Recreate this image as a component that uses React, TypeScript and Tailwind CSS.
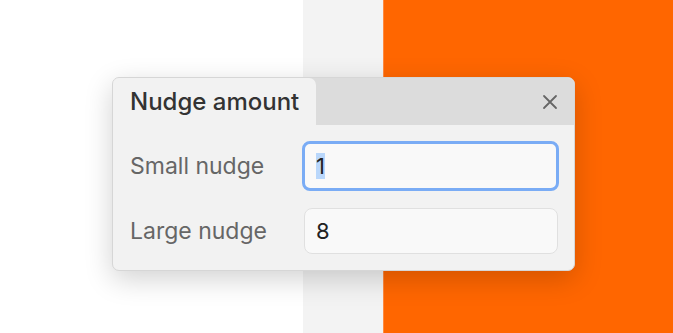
import { useEffect, useRef } from "react";

function CloseIcon() {
    return (
        <svg width="16" height="16" viewBox="0 0 16 16" fill="none" stroke="#666666" strokeWidth="1.8" strokeLinecap="round">
            <path d="M2 2L14 14M14 2L2 14" />
        </svg>
    );
}

export default function App() {
    const smallRef = useRef<HTMLInputElement>(null);

    useEffect(() => {
        const el = smallRef.current;
        if (el) {
            el.focus();
            el.select();
        }
    }, []);

    return (
        <div className="relative flex h-[333px] w-[673px] overflow-hidden font-['Inter',sans-serif]">
            <div className="w-[303px] bg-white" />
            <div className="w-[80px] bg-[#f3f3f3]" />
            <div className="flex-1 border-l border-[#ff8a40] bg-[#ff6600]" />

            {/* floating dialog */}
            <div className="absolute left-[112px] top-[77px] flex w-[463px] flex-col overflow-hidden rounded-[7px] border border-[#d6d6d6] bg-[#f2f2f2] shadow-[0_8px_28px_rgba(0,0,0,0.18)]">
                <div className="flex h-[47px] bg-[#dcdcdc]">
                    <div className="flex w-[203px] items-center rounded-tr-[7px] bg-[#f2f2f2] pl-[17px] text-[24px] font-medium text-[#333333]">
                        Nudge amount
                    </div>
                    <div className="flex flex-1 items-center justify-end rounded-bl-[7px] pr-[16px]">
                        <CloseIcon />
                    </div>
                </div>

                <div className="flex flex-col gap-[17px] pb-[16px] pl-[17px] pr-[15px] pt-[16px]">
                    <div className="flex items-center">
                        <span className="w-[172px] shrink-0 text-[23px] text-[#666666]">Small nudge</span>
                        <input
                            ref={smallRef}
                            defaultValue="1"
                            className="h-[50px] min-w-0 flex-1 rounded-[8px] border-[3px] border-[#7aacf5] bg-[#f9f9f9] px-[11px] text-[22px] text-[#222222] outline-none selection:bg-[#b9d7fb]"
                        />
                    </div>
                    <div className="flex items-center pr-[1px]">
                        <span className="w-[174px] shrink-0 text-[23px] text-[#666666]">Large nudge</span>
                        <input
                            defaultValue="8"
                            className="h-[46px] min-w-0 flex-1 rounded-[8px] border border-[#e0e0e0] bg-[#f9f9f9] px-[11px] text-[22px] text-[#222222] outline-none"
                        />
                    </div>
                </div>
            </div>
        </div>
    );
}
